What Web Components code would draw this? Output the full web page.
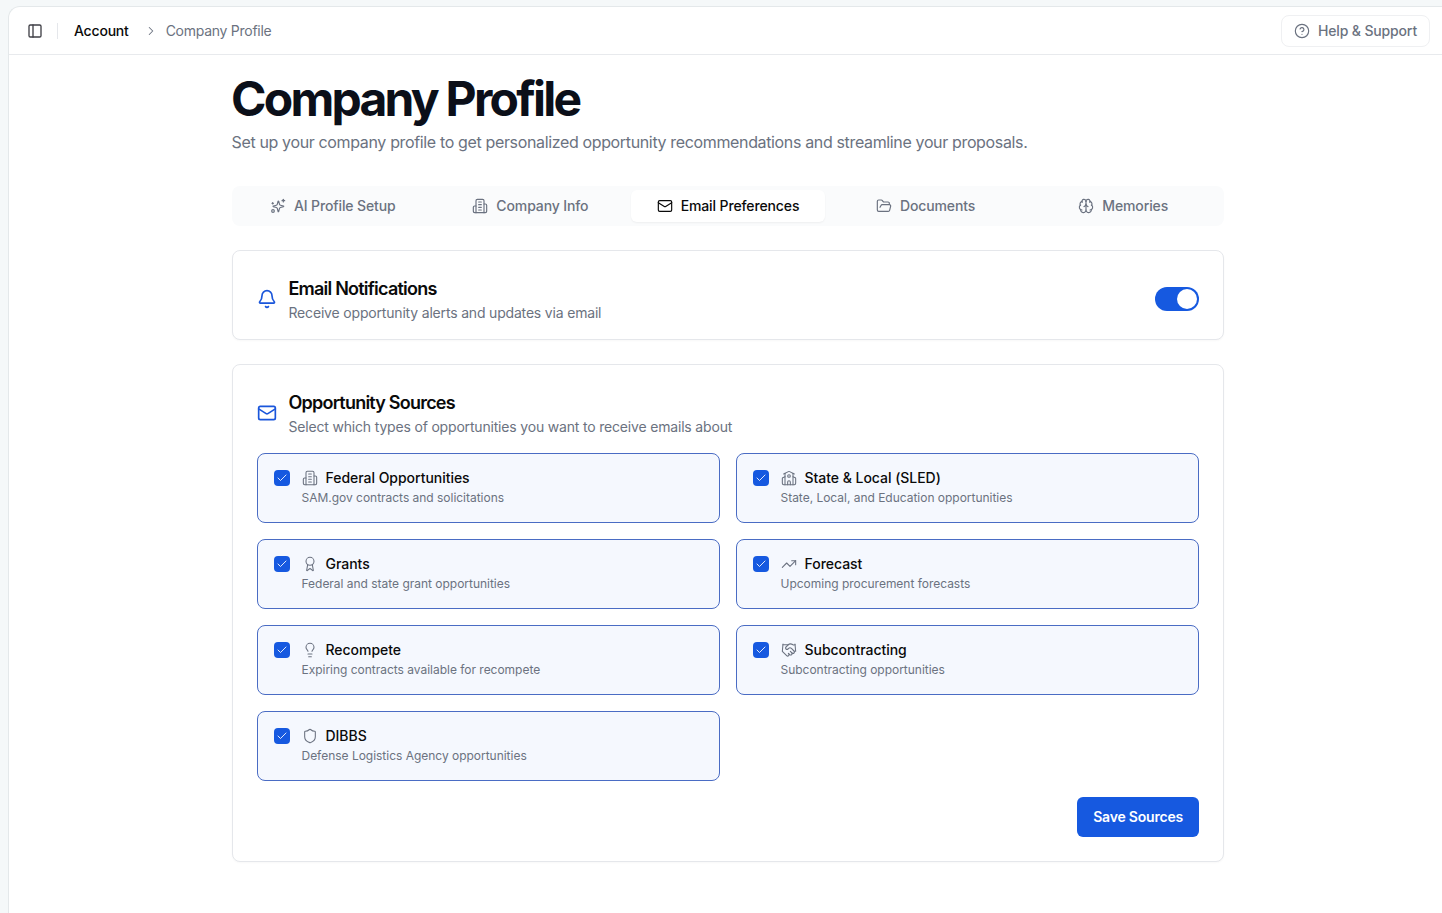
<!DOCTYPE html>
<html lang="en">
<head>
<meta charset="utf-8">
<title>Company Profile</title>
<style>
	html, body { margin: 0; height: 100%; overflow: hidden; background: #f5f8f9; }
	body { font-family: Inter, "Liberation Sans", sans-serif; color: #0a0a0a; }
</style>
</head>
<body>
<app-shell>
	<top-bar slot="top">
		<span slot="parent">Account</span>
		<span slot="current">Company Profile</span>
		<span slot="help">Help &amp; Support</span>
	</top-bar>
	<page-head>
		<span slot="title">Company Profile</span>
		<span slot="sub">Set up your company profile to get personalized opportunity recommendations and streamline your proposals.</span>
	</page-head>
	<tab-bar>
		<tab-item icon="sparkles">AI Profile Setup</tab-item>
		<tab-item icon="building">Company Info</tab-item>
		<tab-item icon="mail" active>Email Preferences</tab-item>
		<tab-item icon="folder">Documents</tab-item>
		<tab-item icon="brain">Memories</tab-item>
	</tab-bar>
	<settings-card icon="bell" class="compact">
		<span slot="title">Email Notifications</span>
		<span slot="sub">Receive opportunity alerts and updates via email</span>
		<toggle-switch slot="action"></toggle-switch>
	</settings-card>
	<settings-card icon="mail">
		<span slot="title">Opportunity Sources</span>
		<span slot="sub">Select which types of opportunities you want to receive emails about</span>
		<source-grid>
			<source-card icon="building" label="Federal Opportunities">SAM.gov contracts and solicitations</source-card>
			<source-card icon="school" label="State &amp; Local (SLED)">State, Local, and Education opportunities</source-card>
			<source-card icon="award" label="Grants">Federal and state grant opportunities</source-card>
			<source-card icon="trending" label="Forecast">Upcoming procurement forecasts</source-card>
			<source-card icon="bulb" label="Recompete">Expiring contracts available for recompete</source-card>
			<source-card icon="handshake" label="Subcontracting">Subcontracting opportunities</source-card>
			<source-card icon="shield" label="DIBBS">Defense Logistics Agency opportunities</source-card>
		</source-grid>
		<save-button>Save Sources</save-button>
	</settings-card>
</app-shell>

<script>
const ICONS = {
	panel: '<rect x="3" y="3" width="18" height="18" rx="2"/><path d="M9 3v18"/>',
	chevron: '<path d="m9 18 6-6-6-6"/>',
	help: '<circle cx="12" cy="12" r="10"/><path d="M9.09 9a3 3 0 0 1 5.83 1c0 2-3 3-3 3"/><path d="M12 17h.01"/>',
	sparkles: '<path d="M10.9 15.6a2 2 0 0 0-1.4-1.4l-4.6-1.2a.5.5 0 0 1 0-.96l4.6-1.2a2 2 0 0 0 1.4-1.4l1.2-4.6a.5.5 0 0 1 .96 0l1.2 4.6a2 2 0 0 0 1.4 1.4l4.6 1.2a.5.5 0 0 1 0 .96l-4.6 1.2a2 2 0 0 0-1.4 1.4l-1.2 4.6a.5.5 0 0 1-.96 0z"/><path d="M20 2v4"/><path d="M22 4h-4"/><circle cx="4.5" cy="19.5" r="2"/><path d="M4 7v2"/><path d="M5 8H3"/>',
	building: '<path d="M6 22V4a2 2 0 0 1 2-2h8a2 2 0 0 1 2 2v18Z"/><path d="M6 12H4a2 2 0 0 0-2 2v6a2 2 0 0 0 2 2h2"/><path d="M18 9h2a2 2 0 0 1 2 2v9a2 2 0 0 1-2 2h-2"/><path d="M10 6h4"/><path d="M10 10h4"/><path d="M10 14h4"/><path d="M10 18h4"/>',
	school: '<path d="M14 22v-4a2 2 0 1 0-4 0v4"/><path d="m18 10 3.447 1.724a1 1 0 0 1 .553.894V20a2 2 0 0 1-2 2H4a2 2 0 0 1-2-2v-7.382a1 1 0 0 1 .553-.894L6 10"/><path d="M18 5v17"/><path d="m4 6 7.106-3.553a2 2 0 0 1 1.788 0L20 6"/><path d="M6 5v17"/><circle cx="12" cy="9" r="2"/>',
	mail: '<rect x="2" y="4" width="20" height="16" rx="2"/><path d="m22 7-8.97 5.7a1.94 1.94 0 0 1-2.06 0L2 7"/>',
	folder: '<path d="m6 14 1.5-2.9A2 2 0 0 1 9.24 10H20a2 2 0 0 1 1.94 2.5l-1.54 6a2 2 0 0 1-1.95 1.5H4a2 2 0 0 1-2-2V5a2 2 0 0 1 2-2h3.9a2 2 0 0 1 1.69.9l.81 1.2a2 2 0 0 0 1.67.9H18a2 2 0 0 1 2 2v2"/>',
	brain: '<path d="M12 18V5"/><path d="M15 13a4.17 4.17 0 0 1-3-4 4.17 4.17 0 0 1-3 4"/><path d="M17.598 6.5A3 3 0 1 0 12 5a3 3 0 1 0-5.598 1.5"/><path d="M17.997 5.125a4 4 0 0 1 2.526 5.77"/><path d="M18 18a4 4 0 0 0 2-7.464"/><path d="M19.967 17.483A4 4 0 1 1 12 18a4 4 0 1 1-7.967-.517"/><path d="M6 18a4 4 0 0 1-2-7.464"/><path d="M6.003 5.125a4 4 0 0 0-2.526 5.77"/>',
	bell: '<path d="M10.268 21a2 2 0 0 0 3.464 0"/><path d="M3.262 15.326A1 1 0 0 0 4 17h16a1 1 0 0 0 .74-1.673C19.41 13.956 18 12.499 18 8A6 6 0 0 0 6 8c0 4.499-1.411 5.956-2.738 7.326"/>',
	award: '<path d="m15.477 12.89 1.515 8.526a.5.5 0 0 1-.81.47l-3.58-2.687a1 1 0 0 0-1.197 0l-3.586 2.686a.5.5 0 0 1-.81-.469l1.514-8.526"/><circle cx="12" cy="8" r="6"/>',
	trending: '<path d="M22 7 13.5 15.5 8.5 10.5 2 17"/><path d="M16 7h6v6"/>',
	bulb: '<path d="M15 14c.2-1 .7-1.7 1.5-2.5 1-.9 1.5-2.2 1.5-3.5A6 6 0 0 0 6 8c0 1 .2 2.2 1.5 3.5.7.7 1.3 1.5 1.5 2.5"/><path d="M9 18h6"/><path d="M10 22h4"/>',
	shield: '<path d="M20 13c0 5-3.5 7.5-7.66 8.95a1 1 0 0 1-.67-.01C7.5 20.5 4 18 4 13V6a1 1 0 0 1 1-1c2 0 4.5-1.2 6.24-2.72a1.17 1.17 0 0 1 1.52 0C14.51 3.81 17 5 19 5a1 1 0 0 1 1 1z"/>',
	handshake: '<path d="m11 17 2 2a1 1 0 1 0 3-3"/><path d="m14 14 2.5 2.5a1 1 0 1 0 3-3l-3.88-3.88a3 3 0 0 0-4.24 0l-.88.88a1 1 0 1 1-3-3l2.81-2.81a5.79 5.79 0 0 1 7.06-.87l.47.28a2 2 0 0 0 1.42.25L21 4"/><path d="m21 3 1 11h-2"/><path d="M3 3 2 14l6.5 6.5a1 1 0 1 0 3-3"/><path d="M3 4h8"/>',
	check: '<path d="M20 6 9 17l-5-5"/>'
};

class AppIcon extends HTMLElement {
	constructor(){
		super();
		this.attachShadow({mode : 'open'});
	}
	static get observedAttributes(){
		return ['name'];
	}
	attributeChangedCallback(){
		this._updateRendering();
	}
	connectedCallback(){
		this._updateRendering();
	}
	_updateRendering(){
		const size = this.getAttribute('size') || 16;
		const weight = this.getAttribute('weight') || 2;
		const body = ICONS[this.getAttribute('name')] || '';
		this.shadowRoot.innerHTML = `
			<style>
				:host{ display: inline-flex; flex: none; width: ${size}px; height: ${size}px; }
				svg{ display: block; }
			</style>
			<svg xmlns="http://www.w3.org/2000/svg" width="${size}" height="${size}" viewBox="0 0 24 24" fill="none" stroke="currentColor" stroke-width="${weight}" stroke-linecap="round" stroke-linejoin="round">${body}</svg>
		`;
	}
}
customElements.define('app-icon', AppIcon);

class AppShell extends HTMLElement {
	constructor(){
		super();
		this.attachShadow({mode : 'open'}).innerHTML = `
			<style>
				:host{ display: block; box-sizing: border-box; height: calc(100vh - 6px); margin: 6px 0 0 8px; background: #fff;
					border-top: 1px solid #e4e8ea; border-left: 1px solid #e4e8ea; border-top-left-radius: 12px; overflow: hidden; }
				main{ width: 992px; margin-left: 223px; }
			</style>
			<slot name="top"></slot>
			<main><slot></slot></main>
		`;
	}
}
customElements.define('app-shell', AppShell);

class TopBar extends HTMLElement {
	constructor(){
		super();
		this.attachShadow({mode : 'open'}).innerHTML = `
			<style>
				:host{ display: flex; align-items: center; box-sizing: border-box; height: 48px; padding: 0 12px 0 18px;
					border-bottom: 1px solid #e8eaed; font-size: 14px; }
				.sep{ width: 1px; height: 16px; background: #e5e7eb; margin: 0 16px 0 14px; }
				.parent{ color: #0a0a0a; font-weight: 500; letter-spacing: -0.2px; }
				.chev{ color: #6b7280; margin: 0 8px 0 15px; }
				.current{ color: #6b7280; letter-spacing: -0.27px; }
				.help{ display: flex; align-items: center; gap: 8px; height: 32px; box-sizing: border-box; margin-left: auto; padding: 0 12px;
					color: #6b7280; font-weight: 500; letter-spacing: -0.15px; border: 1px solid #eff0f2; border-radius: 8px; }
				.panel{ color: #3f3f46; }
			</style>
			<app-icon class="panel" name="panel" size="16"></app-icon>
			<div class="sep"></div>
			<span class="parent"><slot name="parent"></slot></span>
			<app-icon class="chev" name="chevron" size="14" weight="1.75"></app-icon>
			<span class="current"><slot name="current"></slot></span>
			<div class="help"><app-icon name="help" size="16" weight="1.75"></app-icon><slot name="help"></slot></div>
		`;
	}
}
customElements.define('top-bar', TopBar);

class PageHead extends HTMLElement {
	constructor(){
		super();
		this.attachShadow({mode : 'open'}).innerHTML = `
			<style>
				:host{ display: block; padding-top: 20px; margin-bottom: 32px; }
				h1{ margin: 0 0 0 -1px; font-size: 48px; line-height: 48px; font-weight: 700; letter-spacing: -2.76px; color: #0b0f19; }
				p{ margin: 7px 0 0 -0.5px; font-size: 16px; line-height: 24px; letter-spacing: -0.355px; color: #6b7280; }
			</style>
			<h1><slot name="title"></slot></h1>
			<p><slot name="sub"></slot></p>
		`;
	}
}
customElements.define('page-head', PageHead);

class TabBar extends HTMLElement {
	constructor(){
		super();
		this.attachShadow({mode : 'open'}).innerHTML = `
			<style>
				:host{ display: grid; grid-template-columns: repeat(5, 1fr); gap: 4px; padding: 4px; height: 40px; box-sizing: border-box;
					background: #fafbfc; border-radius: 8px; margin-bottom: 24px; }
			</style>
			<slot></slot>
		`;
	}
}
customElements.define('tab-bar', TabBar);

class TabItem extends HTMLElement {
	constructor(){
		super();
		this.attachShadow({mode : 'open'}).innerHTML = `
			<style>
				:host{ display: flex; align-items: center; justify-content: center; gap: 8px; height: 32px; border-radius: 6px;
					font-size: 14px; font-weight: 500; letter-spacing: -0.12px; color: #6b7280; }
				:host([active]){ background: #fff; color: #0a0a0a; box-shadow: 0 1px 2px rgba(0,0,0,.05); }
				span{ padding-bottom: 1px; }
			</style>
			<app-icon size="16" weight="1.75"></app-icon><span><slot></slot></span>
		`;
	}
	connectedCallback(){
		this.shadowRoot.querySelector('app-icon').setAttribute('name', this.getAttribute('icon'));
	}
}
customElements.define('tab-item', TabItem);

class SettingsCard extends HTMLElement {
	constructor(){
		super();
		this.attachShadow({mode : 'open'}).innerHTML = `
			<style>
				:host{ display: block; box-sizing: border-box; background: #fff; border: 1px solid #e5e7eb; border-radius: 8px;
					padding: 24px; margin-bottom: 24px; box-shadow: 0 1px 2px rgba(0,0,0,.03); }
				:host(.compact){ padding-bottom: 16px; }
				header{ display: flex; align-items: center; gap: 11.5px; margin-bottom: 16px; }
				:host(.compact) header{ margin-bottom: 0; }
				.ic{ color: #1a56db; }
				.text{ flex: 1; }
				.title{ font-size: 18px; line-height: 28px; font-weight: 600; letter-spacing: -0.78px; color: #0a0a0a; }
				.sub{ font-size: 14px; line-height: 20px; letter-spacing: -0.18px; color: #6b7280; }
			</style>
			<header>
				<app-icon class="ic" size="20" weight="2"></app-icon>
				<div class="text">
					<div class="title"><slot name="title"></slot></div>
					<div class="sub"><slot name="sub"></slot></div>
				</div>
				<slot name="action"></slot>
			</header>
			<slot></slot>
		`;
	}
	connectedCallback(){
		this.shadowRoot.querySelector('app-icon').setAttribute('name', this.getAttribute('icon'));
	}
}
customElements.define('settings-card', SettingsCard);

class ToggleSwitch extends HTMLElement {
	constructor(){
		super();
		this.attachShadow({mode : 'open'}).innerHTML = `
			<style>
				:host{ display: flex; align-items: center; justify-content: flex-end; box-sizing: border-box; width: 44px; height: 24px;
					padding: 2px; border-radius: 12px; background: #1659e0; }
				i{ display: block; width: 20px; height: 20px; border-radius: 50%; background: #fff; }
			</style>
			<i></i>
		`;
	}
}
customElements.define('toggle-switch', ToggleSwitch);

class SourceGrid extends HTMLElement {
	constructor(){
		super();
		this.attachShadow({mode : 'open'}).innerHTML = `
			<style>
				:host{ display: grid; grid-template-columns: 1fr 1fr; gap: 16px; margin-bottom: 16px; }
			</style>
			<slot></slot>
		`;
	}
}
customElements.define('source-grid', SourceGrid);

class SourceCard extends HTMLElement {
	constructor(){
		super();
		this.attachShadow({mode : 'open'}).innerHTML = `
			<style>
				:host{ display: flex; gap: 11.5px; box-sizing: border-box; height: 70px; padding: 16px; background: #f5f8fe;
					border: 1px solid #4a6cc4; border-radius: 8px; }
				.box{ display: flex; align-items: center; justify-content: center; flex: none; width: 16px; height: 16px;
					border-radius: 4px; background: #1659e0; color: #fff; }
				.row{ display: flex; align-items: center; gap: 8px; height: 20px; margin-top: -2px; }
				.ic{ color: #6b7280; }
				.label{ font-size: 14px; line-height: 20px; font-weight: 500; letter-spacing: -0.03px; color: #0a0a0a; }
				.desc{ font-size: 12px; line-height: 16px; margin-top: 2px; letter-spacing: -0.02px; color: #6b7280; }
			</style>
			<div class="box"><app-icon name="check" size="12" weight="1.75"></app-icon></div>
			<div>
				<div class="row"><app-icon class="ic" size="16" weight="1.6"></app-icon><span class="label"></span></div>
				<div class="desc"><slot></slot></div>
			</div>
		`;
	}
	connectedCallback(){
		this.shadowRoot.querySelector('.ic').setAttribute('name', this.getAttribute('icon'));
		this.shadowRoot.querySelector('.label').textContent = this.getAttribute('label');
	}
}
customElements.define('source-card', SourceCard);

class SaveButton extends HTMLElement {
	constructor(){
		super();
		this.attachShadow({mode : 'open'}).innerHTML = `
			<style>
				:host{ display: flex; width: fit-content; margin-left: auto; align-items: center; height: 40px; box-sizing: border-box; padding: 0 16px 1px;
					border-radius: 6px; background: #1659e0; color: #fff; font-size: 14px; font-weight: 600; letter-spacing: -0.2px; }
			</style>
			<slot></slot>
		`;
	}
}
customElements.define('save-button', SaveButton);
</script>
</body>
</html>
